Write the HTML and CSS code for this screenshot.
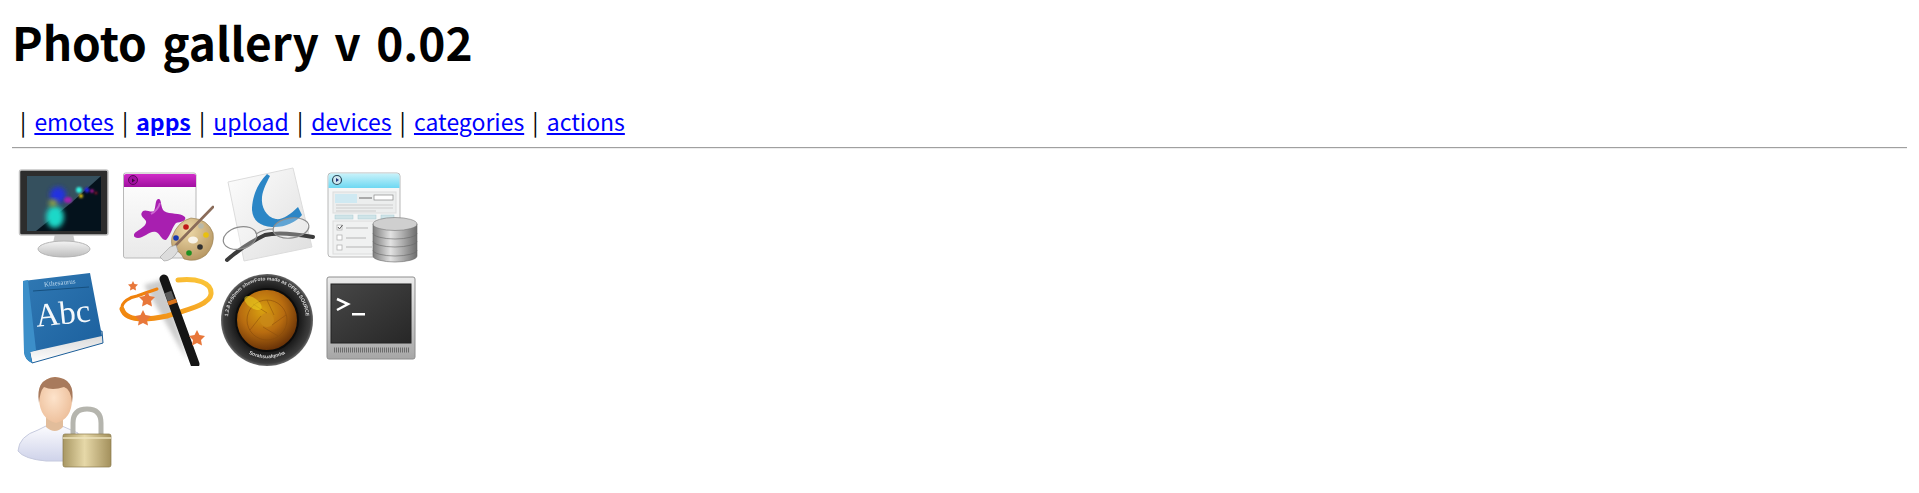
FILE: index.html
```html
<!DOCTYPE html>
<html lang="en">
<head>
    <meta charset="UTF-8">
    <title>Photo gallery v 0.02</title>
    <link rel="stylesheet" href="styles.css">
</head>
<body>
    <h1>Photo gallery v 0.02</h1>

    <div class="nav">
        | <a href="#">emotes</a>
        | <a href="#" class="current">apps</a>
        | <a href="#">upload</a>
        | <a href="#">devices</a>
        | <a href="#">categories</a>
        | <a href="#">actions</a>
    </div>
    <hr>

    <!-- Иконки -->
    <div class="gallery">
        <a href="#"><svg class="thumb" viewBox="0 0 96 96">
            <defs>
                <linearGradient id="standGrad" x1="0" y1="0" x2="0" y2="1"><stop offset="0" stop-color="#f4f4f4"/><stop offset="1" stop-color="#bdbdbd"/></linearGradient>
                <filter id="glow" x="-50%" y="-50%" width="200%" height="200%"><feGaussianBlur stdDeviation="2.4"/></filter>
                <filter id="glowSmall" x="-50%" y="-50%" width="200%" height="200%"><feGaussianBlur stdDeviation="1"/></filter>
                <clipPath id="screenClip"><rect x="11" y="9" width="74" height="55"/></clipPath>
            </defs>
            <path d="M39 67h18l2 9H37z" fill="#c9c9c9"/>
            <ellipse cx="48" cy="82" rx="26" ry="8" fill="url(#standGrad)" stroke="#b5b5b5"/>
            <rect x="3.5" y="3" width="88.5" height="65" rx="2" fill="#2d2d2d" stroke="#c4c4c4" stroke-width="1.5"/>
            <rect x="11" y="9" width="74" height="55" fill="#04121c"/>
            <g clip-path="url(#screenClip)">
                <path d="M11 9h74L55 36 20 64h-9z" fill="#35505e"/>
                <ellipse cx="39" cy="50" rx="9" ry="11" fill="#1fd8c8" filter="url(#glow)"/>
                <ellipse cx="42" cy="28" rx="8" ry="8" fill="#2430e0" filter="url(#glow)"/>
                <ellipse cx="37" cy="36" rx="4" ry="3" fill="#a8b838" filter="url(#glow)"/>
                <ellipse cx="52" cy="33" rx="4" ry="3" fill="#a020b0" filter="url(#glowSmall)"/>
                <circle cx="63" cy="23" r="3" fill="#30f0e0" filter="url(#glowSmall)"/>
                <circle cx="65" cy="29" r="2" fill="#e8c818" filter="url(#glowSmall)"/>
                <circle cx="71" cy="23" r="2.5" fill="#2020e0" filter="url(#glowSmall)"/>
                <circle cx="76" cy="24" r="1.8" fill="#c010a0" filter="url(#glowSmall)"/>
                <circle cx="80" cy="26" r="1.2" fill="#c01030" filter="url(#glowSmall)"/>
            </g>
        </svg></a>

        <a href="#"><svg class="thumb" viewBox="0 0 96 96">
            <defs>
                <linearGradient id="pageGrad" x1="0" y1="0" x2="0" y2="1"><stop offset="0" stop-color="#fff"/><stop offset="1" stop-color="#e9e9e9"/></linearGradient>
                <linearGradient id="purpleGrad" x1="0" y1="0" x2="0" y2="1"><stop offset="0" stop-color="#d02cc8"/><stop offset="1" stop-color="#a010a0"/></linearGradient>
                <radialGradient id="woodGrad" cx=".4" cy=".3" r=".8"><stop offset="0" stop-color="#eed9a8"/><stop offset="1" stop-color="#b08f5a"/></radialGradient>
            </defs>
            <rect x="5.5" y="6" width="72.5" height="85" rx="2" fill="url(#pageGrad)" stroke="#b9b9b9"/>
            <path d="M6 20V8.5Q6 7 8 7h68q2 0 2 1.5V20z" fill="url(#purpleGrad)"/>
            <circle cx="15" cy="13" r="4.5" fill="#a010a0" stroke="#5a0a5a"/>
            <path d="M17 13.500l-3-2v4z" fill="#40083f"/>
            <path d="M36 44C38 40 37 33 40 32C44 31 42 40 46 44C52 48 62 45 67 50C69 54 62 55 58 56C54 60 53 68 48 73C43 73 42 66 38 65C32 63 26 71 20 71C15 71 15 67 18 65C24 61 29 58 28 54C25 50 21 48 25 44C28 42 33 46 36 44z" fill="#a81fb0"/>
            <path d="M33 47Q40 43 42 36" fill="none" stroke="#cc66d0" stroke-width="2"/>
            <path d="M73 51Q90 52 95 66Q97 78 88 88Q78 96 66 92Q62 84 58 84Q52 80 54 70Q60 54 73 51z" fill="url(#woodGrad)" stroke="#94784a" stroke-width=".6"/>
            <circle cx="68" cy="60" r="2.800" fill="#c01818"/>
            <circle cx="83" cy="59" r="2.800" fill="#b9b9a8"/>
            <circle cx="88" cy="68" r="2.800" fill="#e8c010"/>
            <circle cx="58" cy="71" r="2.800" fill="#1838b0"/>
            <circle cx="82" cy="80" r="2.800" fill="#303030"/>
            <circle cx="71" cy="86" r="2.800" fill="#1c9020"/>
            <ellipse cx="75" cy="73" rx="5" ry="3.500" fill="#fff" opacity=".8"/>
            <path d="M95 40L58 78" stroke="#8a6c5a" stroke-width="2.600" stroke-linecap="round"/>
            <path d="M58 78L52 80L42 90L46 94Q54 94 60 84z" fill="#dcdcdc" stroke="#9a9a9a" stroke-width=".6"/>
        </svg></a>

        <a href="#"><svg class="thumb" viewBox="0 0 96 96">
            <defs>
                <linearGradient id="sheetGrad" x1="0" y1="0" x2="1" y2="1"><stop offset="0" stop-color="#fdfdfd"/><stop offset="1" stop-color="#dedede"/></linearGradient>
            </defs>
            <path d="M8 15L73 1L92 80L24 94z" fill="url(#sheetGrad)" stroke="#dcdcdc"/>
            <path d="M47 7C36 18 32 32 32 43C33 54 40 59 52 60C64 61 76 55 82 48L78 40C70 48 62 53 56 52C46 50 41 40 42 30C43 22 47 15 50 9z" fill="#2b86c6"/>
            <path d="M7 93Q24 78 45 68Q60 64 93 70" fill="none" stroke="#3c3c3c" stroke-width="4" stroke-linecap="round"/>
            <ellipse cx="20" cy="71" rx="17" ry="11" transform="rotate(-14 20 71)" fill="#fff" fill-opacity=".25" stroke="#8c8c8c" stroke-width="1.200"/>
            <ellipse cx="71" cy="61" rx="18" ry="10" transform="rotate(-8 71 61)" fill="#fff" fill-opacity=".25" stroke="#8c8c8c" stroke-width="1.200"/>
            <path d="M36 67Q44 62 53 62" fill="none" stroke="#8c8c8c" stroke-width="1.200"/>
        </svg></a>

        <a href="#"><svg class="thumb" viewBox="0 0 96 96">
            <defs>
                <linearGradient id="cyanGrad" x1="0" y1="0" x2="0" y2="1"><stop offset="0" stop-color="#c8f2fa"/><stop offset="1" stop-color="#6ed8f2"/></linearGradient>
                <linearGradient id="diskGrad" x1="0" y1="0" x2="1" y2="0"><stop offset="0" stop-color="#7d7d7d"/><stop offset=".4" stop-color="#e2e2e2"/><stop offset="1" stop-color="#6d6d6d"/></linearGradient>
            </defs>
            <rect x="6" y="6" width="72" height="84" rx="3" fill="#f5f6f6" stroke="#b8b8b8"/>
            <path d="M6.500 21V9Q6.500 6.500 9 6.500h66Q77.500 6.500 77.500 9V21z" fill="url(#cyanGrad)"/>
            <circle cx="15" cy="13" r="4.500" fill="#cfe8f0" stroke="#2a4a5a" stroke-width="1.200"/>
            <path d="M17 13l-3-2v4z" fill="#20307a"/>
            <rect x="11" y="25" width="63" height="21" fill="#eceeee" stroke="#dcdcdc"/>
            <rect x="13" y="27" width="22" height="9" fill="#cfe9f2"/>
            <rect x="37" y="30" width="13" height="2" fill="#aaa"/>
            <rect x="52" y="28" width="19" height="5" fill="#fff" stroke="#888" stroke-width=".7"/>
            <path d="M14 38h57M14 41h57M14 44h40" stroke="#ccc"/>
            <rect x="13" y="48" width="18" height="4" fill="#cfe4e8" stroke="#aacbd2" stroke-width=".5"/>
            <rect x="36" y="48" width="18" height="4" fill="#cfe4e8" stroke="#aacbd2" stroke-width=".5"/>
            <rect x="59" y="48" width="13" height="4" fill="#cfe4e8" stroke="#aacbd2" stroke-width=".5"/>
            <rect x="11" y="54" width="45" height="33" fill="#f0f1f1" stroke="#dcdcdc"/>
            <rect x="15" y="58" width="5" height="5" fill="#fff" stroke="#aaa" stroke-width=".7"/>
            <rect x="15" y="68" width="5" height="5" fill="#fff" stroke="#aaa" stroke-width=".7"/>
            <rect x="15" y="78" width="5" height="5" fill="#fff" stroke="#aaa" stroke-width=".7"/>
            <path d="M16 60l1.500 2 3-4" fill="none" stroke="#555"/>
            <path d="M24 61h22M24 71h20M24 80h26" stroke="#b5b5b5"/>
            <path d="M51 83v6a22 6 0 0 0 44 0v-6z" fill="url(#diskGrad)" stroke="#666" stroke-width=".6"/>
            <path d="M51 74v9a22 6 0 0 0 44 0v-9z" fill="url(#diskGrad)" stroke="#666" stroke-width=".6"/>
            <path d="M51 66v8a22 6 0 0 0 44 0v-8z" fill="url(#diskGrad)" stroke="#666" stroke-width=".6"/>
            <path d="M51 57v9a22 6 0 0 0 44 0v-9z" fill="url(#diskGrad)" stroke="#666" stroke-width=".6"/>
            <ellipse cx="73" cy="57" rx="22" ry="6.500" fill="#cfcfcf" stroke="#777" stroke-width=".6"/>
        </svg></a>

        <a href="#"><svg class="thumb" viewBox="0 0 96 96">
            <defs>
                <linearGradient id="bookGrad" x1="0" y1="0" x2="1" y2="1"><stop offset="0" stop-color="#3079b4"/><stop offset="1" stop-color="#1a5e9c"/></linearGradient>
                <linearGradient id="leafGrad" x1="0" y1="0" x2="0" y2="1"><stop offset="0" stop-color="#d4d4d4"/><stop offset="1" stop-color="#fff"/></linearGradient>
            </defs>
            <path d="M16 93L13 79L86 61L87 73z" fill="url(#leafGrad)" stroke="#1b5d98"/>
            <path d="M7 11L74 3L86 66L14 82L16 93Q9 90 8 82z" fill="url(#bookGrad)"/>
            <path d="M7 11L12 10L20 80L14 82L16 93Q9 90 8 82z" fill="#3c8fc9"/>
            <text class="book-small" x="44" y="15" text-anchor="middle" transform="rotate(-6 44 15)">Kthesaurus</text>
            <path d="M17 21L73 17" stroke="#16507f"/>
            <text class="book-big" x="48" y="54" text-anchor="middle" transform="rotate(-6 48 54)">Abc</text>
        </svg></a>

        <a href="#"><svg class="thumb" viewBox="0 0 96 96">
            <defs>
                <linearGradient id="ringGrad" x1="0" y1="1" x2="1" y2="0"><stop offset="0" stop-color="#f0820c"/><stop offset="1" stop-color="#fbc73a"/></linearGradient>
                <filter id="swish" x="-30%" y="-30%" width="160%" height="160%"><feGaussianBlur stdDeviation="2"/></filter>
            </defs>
            <path d="M46 9L26 15L69 90z" fill="#a8a8a8" opacity=".6" filter="url(#swish)"/>
            <path d="M4 39C3 32 12 27 19 26C27 23 33 21 39 19" fill="none" stroke="#f0820c" stroke-width="3" stroke-linecap="round"/>
            <path d="M60 10C78 8 94 12 93 24C92 34 72 39 49 46C30 50 8 52 4 39" fill="none" stroke="url(#ringGrad)" stroke-width="5" stroke-linecap="round"/>
            <path d="M46 9L77 94" stroke="#151515" stroke-width="9" stroke-linecap="round"/>
            <path d="M50 22l3 8" stroke="#8a8a8a" stroke-width="7" opacity=".6"/>
            <path d="M53.500 30l1.500 4" stroke="#d9731a" stroke-width="9"/>
            <path d="M15 11l1.500 3 3.500.5-2.500 2.500.5 3.500-3-1.500-3 1.500.5-3.500-2.500-2.500 3.500-.5z" fill="#e8773a"/>
            <path d="M29 21l2.500 5 5.500 1-4 4 1 5.500-5-2.500-5 2.500 1-5.500-4-4 5.500-1z" fill="#e8773a"/>
            <path d="M25 40l2.500 5 5.500 1-4 4 1 5.500-5-2.500-5 2.500 1-5.500-4-4 5.500-1z" fill="#e8773a"/>
            <path d="M79 60l2.500 5 5.500 1-4 4 1 5.500-5-2.500-5 2.500 1-5.500-4-4 5.500-1z" fill="#e8773a"/>
        </svg></a>

        <a href="#"><svg class="thumb" viewBox="0 0 96 96">
            <defs>
                <radialGradient id="lensGrad" cx=".42" cy=".35" r=".7"><stop offset="0" stop-color="#d8a010"/><stop offset=".5" stop-color="#b86c10"/><stop offset="1" stop-color="#5a2806"/></radialGradient>
                <radialGradient id="ringDark" cx=".5" cy=".5" r=".5"><stop offset=".7" stop-color="#1a1a1a"/><stop offset=".94" stop-color="#3d3d3d"/><stop offset="1" stop-color="#6a6a6a"/></radialGradient>
                <path id="lensArc" d="M9 58A39 39 0 1 1 85 58"/>
                <path id="lensArcLow" d="M14 70A39 39 0 0 0 80 70"/>
            </defs>
            <circle cx="47" cy="50" r="46" fill="url(#ringDark)"/>
            <circle cx="47" cy="50" r="31" fill="url(#lensGrad)" stroke="#0c0c0c" stroke-width="2"/>
            <circle cx="47" cy="50" r="20" fill="none" stroke="#8a4c0c" stroke-opacity=".6"/>
            <circle cx="47" cy="50" r="7" fill="#c98a18" opacity=".8"/>
            <path d="M47 30L54 45M66 45L52 55M58 66L43 57M30 60L41 46M33 34L47 43" stroke="#8a4c0c" stroke-opacity=".5"/>
            <ellipse cx="33" cy="33" rx="10" ry="5" transform="rotate(35 33 33)" fill="#f0d820" opacity=".55"/>
            <text class="lens-text"><textPath href="#lensArc" startOffset="50%" text-anchor="middle">1.2.8   f=50mm  showFoto  made as  OPEN SOURCE</textPath></text>
            <text class="lens-text"><textPath href="#lensArcLow" startOffset="50%" text-anchor="middle">Sorahsuafqmha</textPath></text>
        </svg></a>

        <a href="#"><svg class="thumb" viewBox="0 0 96 96">
            <defs>
                <linearGradient id="caseGrad" x1="0" y1="0" x2="0" y2="1"><stop offset="0" stop-color="#ececec"/><stop offset="1" stop-color="#a6a6a6"/></linearGradient>
                <linearGradient id="glassGrad" x1="0" y1="0" x2="1" y2="1"><stop offset="0" stop-color="#474747"/><stop offset="1" stop-color="#272727"/></linearGradient>
            </defs>
            <rect x="5" y="7" width="88" height="82" rx="2" fill="url(#caseGrad)" stroke="#8e8e8e"/>
            <rect x="9" y="14" width="80" height="59" fill="url(#glassGrad)" stroke="#222"/>
            <path d="M15 29L26 34L15 40" fill="none" stroke="#fff" stroke-width="2.500"/>
            <rect x="30" y="43" width="13" height="2.500" fill="#fff"/>
            <path d="M12 80H87" stroke="#6a6a6a" stroke-width="5" stroke-dasharray="1 1"/>
        </svg></a>

        <a href="#"><svg class="thumb" viewBox="0 0 96 96">
            <defs>
                <linearGradient id="shirtGrad" x1="0" y1="0" x2="0" y2="1"><stop offset="0" stop-color="#fbfbfe"/><stop offset="1" stop-color="#cfd3ea"/></linearGradient>
                <radialGradient id="skinGrad" cx=".45" cy=".45" r=".7"><stop offset="0" stop-color="#fde3cb"/><stop offset="1" stop-color="#eab891"/></radialGradient>
                <linearGradient id="lockGrad" x1="0" y1="0" x2="1" y2="0"><stop offset="0" stop-color="#a89763"/><stop offset=".45" stop-color="#e6d8a8"/><stop offset="1" stop-color="#a3905c"/></linearGradient>
            </defs>
            <path d="M2 78Q3 63 22 57L30 53H46L62 60V88H30Q8 86 2 78z" fill="url(#shirtGrad)" stroke="#c6cade"/>
            <path d="M30 44H47V54Q39 62 30 54z" fill="#e2bd9b"/>
            <path d="M23 26Q21 6 39 4Q57 6 56 26Q56 46 40 50Q24 46 23 26z" fill="url(#skinGrad)"/>
            <path d="M23 30Q19 6 39 4Q60 5 56 30Q55 16 48 14Q36 18 28 14Q24 18 23 30z" fill="#a87a5c"/>
            <path d="M57 62V50Q57 36 71 36Q85 36 85 50V62" fill="none" stroke="#b5b5ae" stroke-width="5"/>
            <rect x="47" y="61" width="48" height="33" rx="2" fill="url(#lockGrad)" stroke="#8a7a4a" stroke-width=".7"/>
            <path d="M47 65H95" stroke="#f0e6c0" stroke-opacity=".7" stroke-width="2"/>
        </svg></a>
    </div>
</body>
</html>
```

FILE: styles.css
```css
body {
    margin: 8px 12px;
    background: #fff;
    color: #000;
    font-family: "Noto Sans CJK KR", "Noto Sans", sans-serif;
}

h1 {
    font-size: 46px;
    font-weight: bold;
    line-height: 60px;
    margin: 3px 0 0;
    word-spacing: 5px;
}

.nav {
    font-size: 23px;
    line-height: 30px;
    margin-top: 35px;
    padding-left: 8px;
    word-spacing: 3px;
}

.nav a {
    color: #00f;
}

.nav .current {
    font-weight: bold;
}

hr {
    margin: 11px 0 0;
    border: none;
    border-top: 1px solid #a0a0a0;
    border-bottom: 1px solid #eee;
}

.gallery {
    display: grid;
    grid-template-columns: repeat(4, 96px);
    gap: 7px 6px;
    margin-top: 18px;
    padding-left: 4px;
}

.gallery a {
    display: block;
    height: 96px;
}

.thumb {
    display: block;
    width: 96px;
    height: 96px;
    filter: blur(0.4px);
}

.book-small {
    font-family: "Liberation Serif", serif;
    font-size: 7px;
    fill: #bcd8ee;
}

.book-big {
    font-family: "Liberation Serif", serif;
    font-size: 33px;
    fill: #f4f8fb;
}

.lens-text {
    font-family: "Liberation Sans", sans-serif;
    font-size: 5px;
    font-weight: bold;
    fill: #d8d8d8;
}
```
